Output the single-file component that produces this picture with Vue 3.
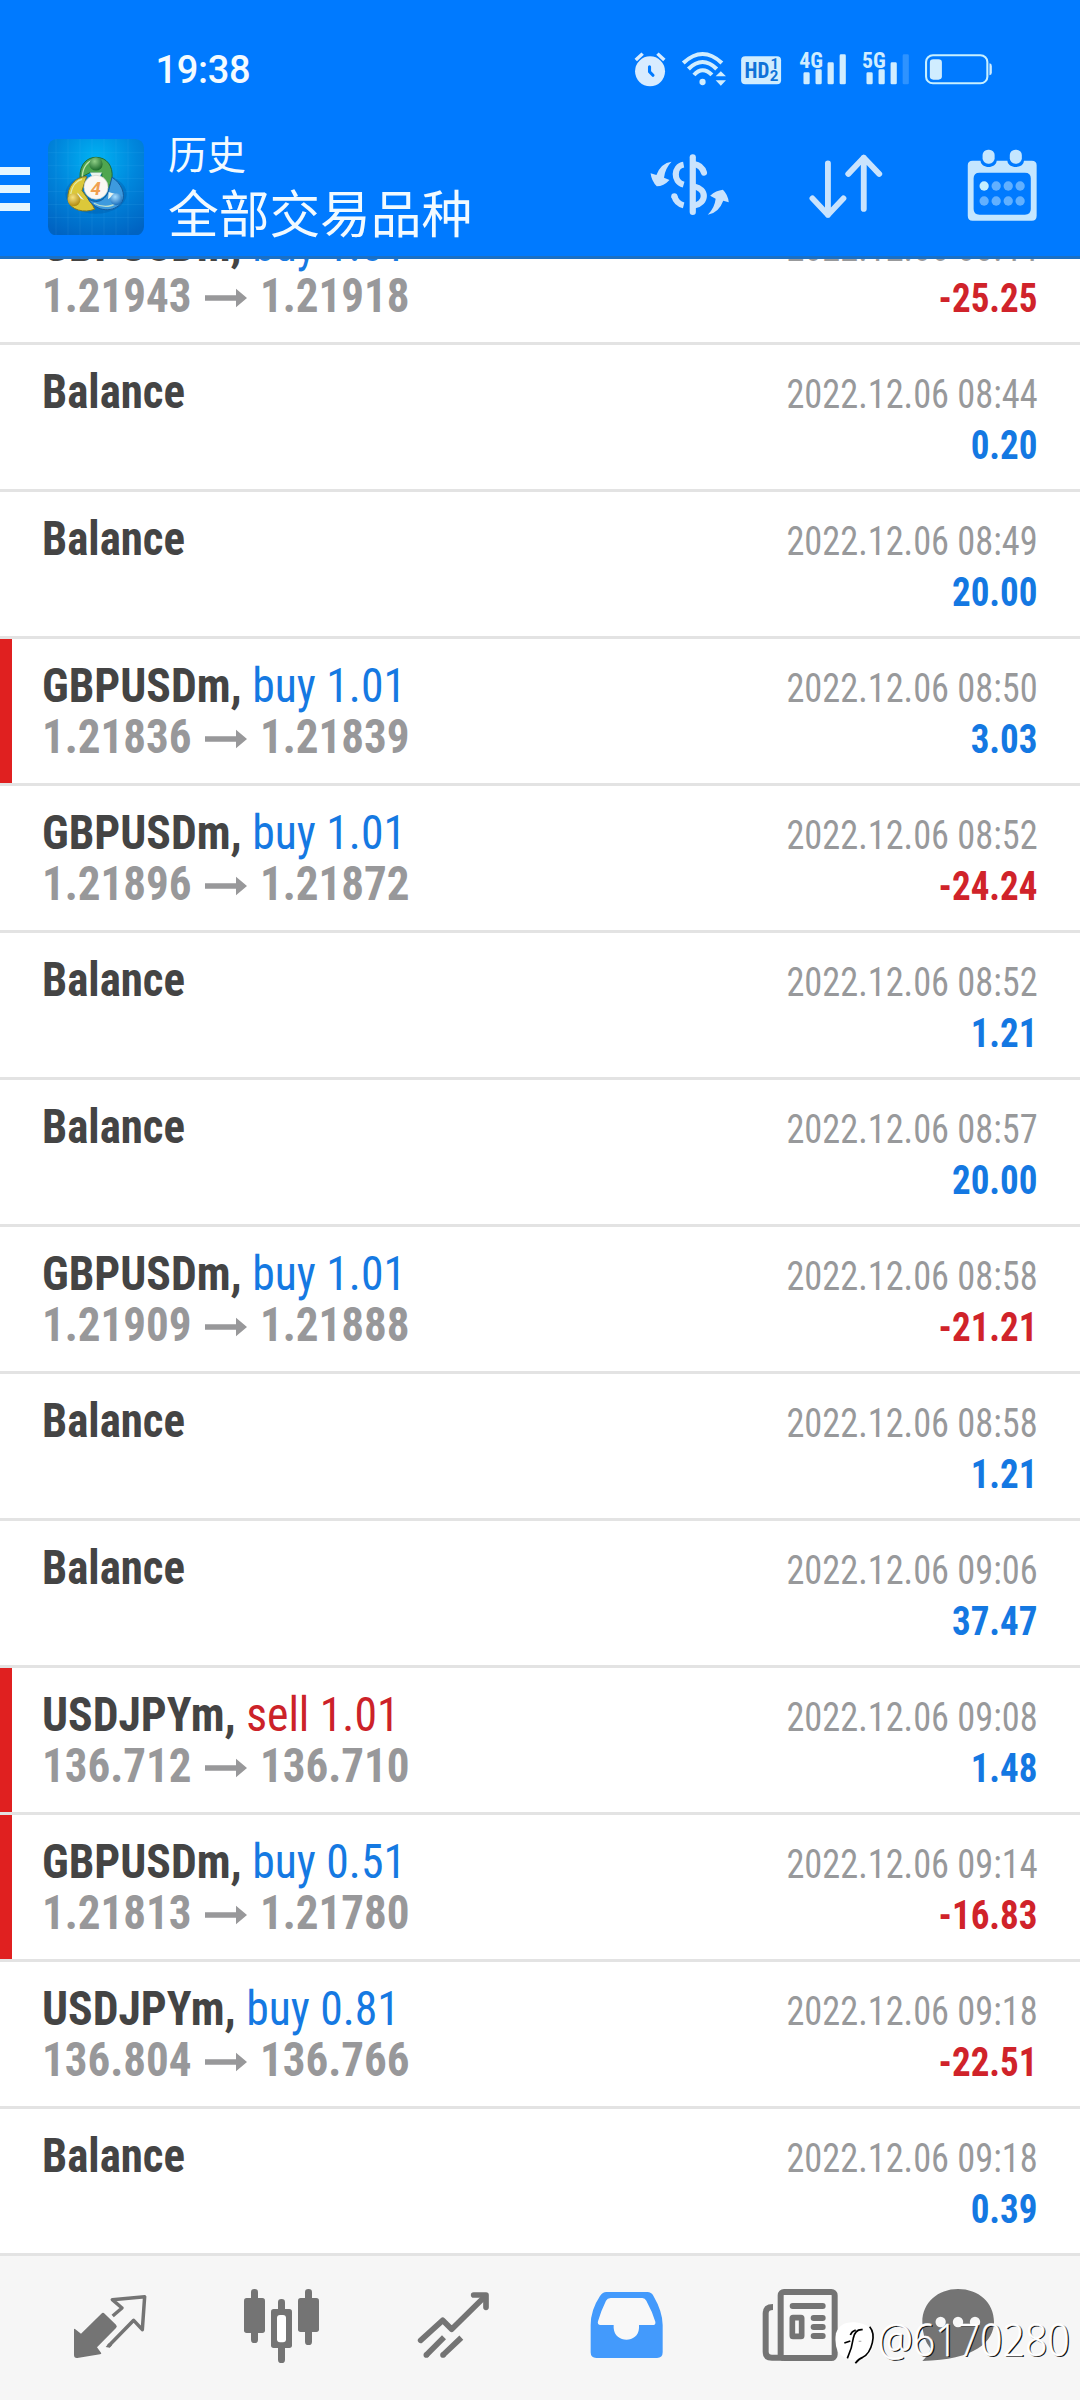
<script setup>
const rows = [
  { symbol: 'GBPUSDm', side: 'buy', lots: '1.01', open: '1.21943', close: '1.21918', time: '2022.12.06 08:44', profit: '-25.25' },
  { time: '2022.12.06 08:44', profit: '0.20' },
  { time: '2022.12.06 08:49', profit: '20.00' },
  { symbol: 'GBPUSDm', side: 'buy', lots: '1.01', open: '1.21836', close: '1.21839', time: '2022.12.06 08:50', profit: '3.03', flagged: true },
  { symbol: 'GBPUSDm', side: 'buy', lots: '1.01', open: '1.21896', close: '1.21872', time: '2022.12.06 08:52', profit: '-24.24' },
  { time: '2022.12.06 08:52', profit: '1.21' },
  { time: '2022.12.06 08:57', profit: '20.00' },
  { symbol: 'GBPUSDm', side: 'buy', lots: '1.01', open: '1.21909', close: '1.21888', time: '2022.12.06 08:58', profit: '-21.21' },
  { time: '2022.12.06 08:58', profit: '1.21' },
  { time: '2022.12.06 09:06', profit: '37.47' },
  { symbol: 'USDJPYm', side: 'sell', lots: '1.01', open: '136.712', close: '136.710', time: '2022.12.06 09:08', profit: '1.48', flagged: true },
  { symbol: 'GBPUSDm', side: 'buy', lots: '0.51', open: '1.21813', close: '1.21780', time: '2022.12.06 09:14', profit: '-16.83', flagged: true },
  { symbol: 'USDJPYm', side: 'buy', lots: '0.81', open: '136.804', close: '136.766', time: '2022.12.06 09:18', profit: '-22.51' },
  { time: '2022.12.06 09:18', profit: '0.39' }
]
const dots = [1290.5, 1325.5, 1360.5, 1395]
</script>

<template>
  <div class="screen">
    <header class="header">
      <div class="status">
        <span class="clock">19:38</span>
        <svg class="status-icons" viewBox="270 140 1050 130" preserveAspectRatio="none">
          <!-- alarm -->
          <g fill="#d8ecff">
            <ellipse cx="319.5" cy="213" rx="43.5" ry="45" />
            <path d="M278 179 L298 160 M361 179 L341 160" stroke="#d8ecff" stroke-width="10" />
            <path d="M318 199V214L328 225" fill="none" stroke="#007aff" stroke-width="9" stroke-linecap="round" stroke-linejoin="round" />
          </g>
          <!-- wifi -->
          <g fill="none" stroke="#d0edff" stroke-width="12">
            <path d="M416 188Q472 134 528 188" />
            <path d="M431 206Q472 164 513 206" />
            <path d="M447 224Q472 196 499 224" />
          </g>
          <ellipse cx="472" cy="245" rx="9" ry="9.5" fill="#d0edff" />
          <path d="M510 228L525 213L540 228ZM510 240H540L525 256Z" fill="#d0edff" />
          <!-- HD -->
          <rect x="584" y="168" width="116" height="84" rx="12" fill="#d0edff" />
          <text x="594" y="233" class="hd" textLength="72" lengthAdjust="spacingAndGlyphs">HD</text>
          <text x="669" y="207" class="hd-small">1</text>
          <text x="667" y="241" class="hd-small" textLength="25" lengthAdjust="spacingAndGlyphs">2</text>
          <!-- signals -->
          <text x="753" y="202" class="net" textLength="69" lengthAdjust="spacingAndGlyphs">4G</text>
          <text x="935" y="202" class="net" textLength="69" lengthAdjust="spacingAndGlyphs">5G</text>
          <g fill="#d0edff">
            <rect x="765" y="216" width="18" height="36" rx="4" />
            <rect x="800" y="207" width="18" height="45" rx="4" />
            <rect x="835" y="186" width="18" height="66" rx="4" />
            <rect x="870" y="162" width="18" height="90" rx="4" />
            <rect x="948" y="216" width="18" height="36" rx="4" />
            <rect x="983" y="207" width="18" height="45" rx="4" />
            <rect x="1018" y="186" width="18" height="66" rx="4" />
            <rect x="1053" y="162" width="18" height="90" rx="4" opacity=".22" />
          </g>
          <!-- battery -->
          <rect x="1121" y="165" width="178" height="84" rx="20" fill="none" stroke="#c8f0ff" stroke-width="6" />
          <rect x="1132" y="177" width="35" height="61" rx="10" fill="#d0edff" />
          <path d="M1305 189Q1312 190 1312 197V217Q1312 224 1305 225Z" fill="#d0edff" />
        </svg>
      </div>

      <div class="appbar">
        <div class="menu"><i></i><i></i><i></i></div>
        <svg class="logo" viewBox="24 25 288 290" preserveAspectRatio="none">
          <defs>
            <radialGradient id="tile" cx=".5" cy=".22" r=".85">
              <stop offset="0" stop-color="#00b4f4" />
              <stop offset=".5" stop-color="#0086dc" />
              <stop offset="1" stop-color="#0063c2" />
            </radialGradient>
            <radialGradient id="gBall" cx=".4" cy=".3" r=".7"><stop offset="0" stop-color="#8fce86" /><stop offset="1" stop-color="#1d6b2c" /></radialGradient>
            <radialGradient id="yBall" cx=".4" cy=".3" r=".7"><stop offset="0" stop-color="#f7e27e" /><stop offset="1" stop-color="#b08a10" /></radialGradient>
            <radialGradient id="bBall" cx=".4" cy=".3" r=".7"><stop offset="0" stop-color="#a4dcff" /><stop offset="1" stop-color="#1a6fbd" /></radialGradient>
          </defs>
          <rect x="24" y="25" width="288" height="290" rx="26" fill="url(#tile)" />
          <path d="M48 25V315M84 25V315M120 25V315M156 25V315M192 25V315M228 25V315M264 25V315M24 66H312M24 105H312M24 144H312M24 183H312M24 222H312M24 261H312" stroke="#5cc8ff" stroke-opacity=".16" stroke-width="2" />
          <ellipse cx="168" cy="190" rx="92" ry="60" fill="#00458c" opacity=".25" />
          <g stroke-linejoin="round">
            <path d="M120 142C118 98 144 80 168 80C200 80 220 106 216 142C212 168 196 188 182 178L186 128L150 126Z" fill="#4fa650" stroke="#1f6a38" stroke-width="3" />
            <path d="M84 208C80 168 106 138 140 138L126 180L158 224L164 236C134 248 90 240 84 208Z" fill="#dcc83a" stroke="#7d7420" stroke-width="3" />
            <path d="M144 204C168 222 196 212 206 180L216 140C244 158 258 190 246 214C224 248 168 246 144 204Z" fill="#3d9ade" stroke="#155a9c" stroke-width="3" />
            <path d="M127 138C128 108 144 92 160 88M92 190C96 166 110 150 126 146M162 218C190 234 224 228 234 212" fill="none" stroke="#e5f5c8" stroke-opacity=".75" stroke-width="4" />
          </g>
          <path d="M150 126L186 126L178 140H158ZM112 186L132 208L114 200ZM206 184L226 190L204 206Z" fill="#e8f4ee" />
          <circle cx="168" cy="100" r="20" fill="url(#gBall)" />
          <circle cx="102" cy="208" r="19" fill="url(#yBall)" />
          <circle cx="229" cy="206" r="18" fill="url(#bBall)" />
          <circle cx="168" cy="170" r="36" fill="#fbf8f4" stroke="#c9cfc8" stroke-width="2" />
          <text x="167" y="192" class="four">4</text>
        </svg>
        <div class="titles">
          <div class="t1">历史</div>
          <div class="t2">全部交易品种</div>
        </div>
        <svg class="actions" viewBox="300 430 1160 250" preserveAspectRatio="none">
          <g fill="#c9e3fd">
            <!-- currency -->
            <path d="M383 486Q352 490 339 526L322 521Q325 545 340 560Q360 560 377 541L361 534Q364 506 383 486Z" />
            <path d="M488 645Q520 640 533 603L549 608Q547 585 532 570Q512 572 495 588L511 597Q508 625 488 645Z" />
            <g fill="none" stroke="#c9e3fd" stroke-width="18">
              <path d="M444.500 473V637" stroke-linecap="round" />
              <path d="M418 495C389 500 386 546 418 555" />
              <path d="M391 590Q397 612 418 617" stroke-linecap="butt" />
              <path d="M391 590V590.1" stroke-linecap="round" />
              <path d="M448 493Q470 496 477 519" stroke-linecap="round" />
              <path d="M448 560C486 568 486 610 448 618" />
            </g>
            <!-- sort -->
            <g fill="none" stroke="#c9e3fd" stroke-width="17" stroke-linecap="round" stroke-linejoin="round">
              <path d="M837 491V646M792 596L837 646L882 596" />
              <path d="M941 628V474M896 523L941 474L986 523" />
            </g>
            <!-- calendar -->
            <path fill="#c4e6ff" fill-rule="evenodd" d="M1257 483H1280C1282 508 1325 508 1327 483H1358C1360 508 1405 508 1406 483H1429Q1443 483 1443 497V648Q1443 663 1429 663H1257Q1243 663 1243 648V497Q1243 483 1257 483ZM1277 519Q1260 519 1260 536V628Q1260 645 1277 645H1409Q1426 645 1426 628V536Q1426 519 1409 519Z" />
            <rect x="1286" y="450" width="35" height="42" rx="16" fill="#c4e6ff" />
            <rect x="1365" y="450" width="35" height="42" rx="16" fill="#c4e6ff" />
            <ellipse v-for="(x, i) in dots" :key="'a' + i" :cx="x" cy="559" rx="13.5" ry="14" :fill="i ? '#62b0ff' : '#c4f0ff'" />
            <ellipse v-for="(x, i) in dots" :key="'b' + i" :cx="x" cy="604" rx="13.5" ry="14" fill="#62b0ff" />
          </g>
        </svg>
      </div>
    </header>

    <main class="list">
      <article v-for="(r, i) in rows" :key="i" class="row" :class="{ flagged: r.flagged }">
        <div class="left">
          <template v-if="r.symbol">
            <div class="name"><b>{{ r.symbol }},</b> <span :class="r.side">{{ r.side }} {{ r.lots }}</span></div>
            <div class="prices">
              <span class="price">{{ r.open }}</span>
              <svg class="arrow" viewBox="0 0 42 20"><path d="M0 7.2H31V.8L42 10L31 19.2V12.8H0Z" fill="#98989a" /></svg>
              <span class="price">{{ r.close }}</span>
            </div>
          </template>
          <div v-else class="name balance"><b>Balance</b></div>
        </div>
        <div class="right">
          <div class="time">{{ r.time }}</div>
          <div class="profit" :class="{ loss: r.profit.startsWith('-') }">{{ r.profit }}</div>
        </div>
      </article>
    </main>

    <nav class="tabs">
      <svg viewBox="72 48 516 432">
        <path d="M222 268Q222 264 226 268L243 281L304 221Q309 216 314 221L348 254Q353 259 348 264L291 322L303 338Q306 342 300 343L232 354Q222 355 222 345Z" fill="#747474" />
        <path d="M338 228L366 204L337 179L434 170L427 269L401 241L325 319" fill="none" stroke="#747474" stroke-width="10.5" stroke-linejoin="round" />
        <path d="M317 321L327 309L336 316L329 323Z" fill="#747474" />
      </svg>
      <svg viewBox="588 48 516 432">
        <g fill="#747474">
          <rect x="732" y="174" width="63" height="105" rx="8" /><rect x="753" y="147" width="21" height="162" rx="10" />
          <rect x="894" y="174" width="63" height="102" rx="8" /><rect x="915" y="147" width="21" height="168" rx="10" />
          <rect x="813" y="207" width="63" height="117" rx="8" /><rect x="834" y="177" width="21" height="192" rx="10" />
        </g>
        <rect x="831" y="225" width="27" height="82" rx="9" fill="#fff" />
      </svg>
      <svg viewBox="1104 48 516 432">
        <g transform="translate(1080 0)" fill="none" stroke="#747474" stroke-width="17">
          <path d="M182 301L248 241L275 268L374 170" stroke-linecap="round" stroke-linejoin="round" />
          <path d="M341 165H378V202" stroke-linecap="round" stroke-linejoin="round" />
          <path d="M252 292L199 345M304 293L249 345" />
          <path d="M199 345h.1M249 345h.1" stroke-linecap="round" />
        </g>
      </svg>
      <svg viewBox="1620 48 516 432">
        <g transform="translate(1080 0)">
          <path d="M739 156H862Q874 156 880 167Q908 215 908 255V337Q908 354 891 354H709Q692 354 692 337V255Q692 210 720 168Q728 156 739 156Z" fill="#439afc" />
          <path d="M752 174H847Q855 174 859 182Q877 215 886 245Q888 255 878 255H837V264C835 311 764 311 761 264V255H722Q711 255 714 244Q723 212 738 182Q742 174 752 174Z" fill="#f8f8f8" />
        </g>
      </svg>
      <svg viewBox="2136 48 516 432">
        <g transform="translate(2160 0)">
          <path d="M159 201Q137 201 137 220V335Q137 353 156 353H190" fill="none" stroke="#747474" stroke-width="18" />
          <rect x="182" y="156" width="162" height="198" rx="10" fill="#f7f7f7" stroke="#747474" stroke-width="18" />
          <g fill="#747474">
            <rect x="209" y="189" width="108" height="18" rx="9" />
            <rect x="272" y="225" width="45" height="18" rx="9" />
            <rect x="272" y="252" width="45" height="18" rx="9" />
            <rect x="272" y="279" width="45" height="18" rx="9" />
          </g>
          <rect x="217" y="233" width="28" height="56" rx="2" fill="#f7f7f7" stroke="#747474" stroke-width="17" />
        </g>
      </svg>
      <svg viewBox="2652 48 516 432">
        <g transform="translate(2160 0)">
          <path d="M714 147C776 147 822 188 822 246C822 305 764 360 607 363Q625 345 632 326Q607 298 607 246C607 188 654 147 714 147Z" fill="#747474" />
          <g fill="#f7f7f7"><circle cx="662" cy="246" r="15.5" /><circle cx="714" cy="246" r="15.5" /><circle cx="765" cy="246" r="15.5" /></g>
        </g>
      </svg>
    </nav>

    <div class="mark">
      <svg class="badge" viewBox="30 30 125 140">
        <path d="M33 70Q45 34 90 37Q146 42 146 90Q144 142 104 150Q60 156 38 124Q28 100 33 70Z" fill="#fff" />
        <path d="M113 59Q91 56 85 84Q81 115 67 145M58 99L76 93M76 75Q80 64 92 60" fill="none" stroke="#000" stroke-width="5" />
        <path d="M101 94H109" stroke="#bbb" stroke-width="4" />
        <path d="M134 50Q149 68 142 98Q134 132 113 142Q101 146 91 160" fill="none" stroke="#000" stroke-width="5" />
      </svg>
      <span class="user">@6170280</span>
    </div>
  </div>
</template>

<style>
body { margin: 0; }
</style>

<style scoped>
.screen {
  position: relative;
  width: 1080px;
  height: 2400px;
  overflow: hidden;
  display: flex;
  flex-direction: column;
  background: #fff;
  font-family: Roboto, "Noto Sans CJK SC", sans-serif;
}
.header {
  flex: none;
  height: 259px;
  box-sizing: border-box;
  background: #007aff;
  border-bottom: 3px solid #1b70c4;
  position: relative;
  z-index: 1;
}
.status {
  display: flex;
  height: 128px;
  align-items: flex-start;
}
.clock {
  box-sizing: border-box;
  width: 633px;
  padding: 48px 0 0 155.5px;
  font-size: 38px;
  line-height: 45px;
  font-weight: 500;
  letter-spacing: -0.3px;
  color: #f4fbff;
}
.status-icons {
  width: 361.6px;
  height: 43.3px;
  margin-top: 46.7px;
}
.hd { font: 700 66px "Roboto Condensed", Roboto, sans-serif; fill: #0f72d8; }
.hd-small { font: 700 42px Roboto, sans-serif; fill: #0f72d8; }
.net { font: 700 66px "Roboto Condensed", Roboto, sans-serif; fill: #d0edff; }
.appbar { display: flex; align-items: flex-start; height: 128px; }
.menu {
  width: 30px;
  margin-top: 39px;
  display: flex;
  flex-direction: column;
  gap: 10px;
}
.menu i { height: 8px; background: #e6f6ff; }
.logo { width: 96px; height: 96.5px; margin: 10.5px 0 0 18px; }
.four { font: 700 56px Roboto, sans-serif; fill: #f0a050; text-anchor: middle; font-style: italic; }
.titles { margin-left: 24px; width: 475.3px; color: #f2faff; font-family: "Noto Sans CJK SC", sans-serif; font-weight: 400; }
.t1 { font-size: 39px; line-height: 48px; }
.t2 { font-size: 50.7px; line-height: 64px; margin-top: 3px; }
.actions { flex: none; width: 399.5px; height: 83.3px; margin-top: 15.3px; }

.list { flex: none; height: 1997px; display: flex; flex-direction: column; justify-content: flex-end; }
.row {
  flex: none;
  height: 144px;
  border-bottom: 3px solid #e3e3e3;
  display: flex;
  justify-content: space-between;
  font-stretch: 75%;
}
.row.flagged { background: linear-gradient(#e02020, #e02020) 0 0 / 12px 100% no-repeat; background-clip: padding-box; }
.left { padding: 21px 0 0 42px; }
.name { font-size: 48px; line-height: 51px; color: #444; white-space: pre; transform: scaleX(.951); transform-origin: 0 0; }
.name.balance { transform: scaleX(.935); }
.buy { color: #1579e2; }
.sell { color: #cc2229; }
.prices { display: flex; align-items: center; height: 51px; }
.price { width: 163px; font-size: 48px; line-height: 51px; font-weight: 700; color: #98989a; transform: scaleX(.938); transform-origin: 0 0; }
.arrow { width: 42px; height: 20px; margin: 4px 13px 0 0; }
.right { padding: 24px 42px 0 0; text-align: right; line-height: 51px; font-size: 40px; color: #98999b; }
.time { transform: scaleX(.908); transform-origin: 100% 0; }
.profit { font-weight: 700; color: #1478e2; transform: scaleX(.926); transform-origin: 100% 0; }
.profit.loss { color: #d0232a; }

.tabs { flex: none; height: 144px; background: #f6f6f6; display: flex; padding-left: 24px; }
.tabs svg { flex: none; width: 172px; height: 144px; overflow: visible; }

.mark { position: absolute; z-index: 2; left: 835px; top: 2320px; display: flex; }
.badge { width: 41.7px; height: 46.7px; }
.user {
  margin: -6px 0 0 1px;
  font: 300 44px/50px "Open Sans", "Noto Sans", sans-serif;
  color: #fff;
  text-shadow: 1.6px 1.2px 0 #111;
  -webkit-text-stroke: 0.5px #fff;
  transform: scaleX(.893);
  transform-origin: 0 0;
}
</style>
